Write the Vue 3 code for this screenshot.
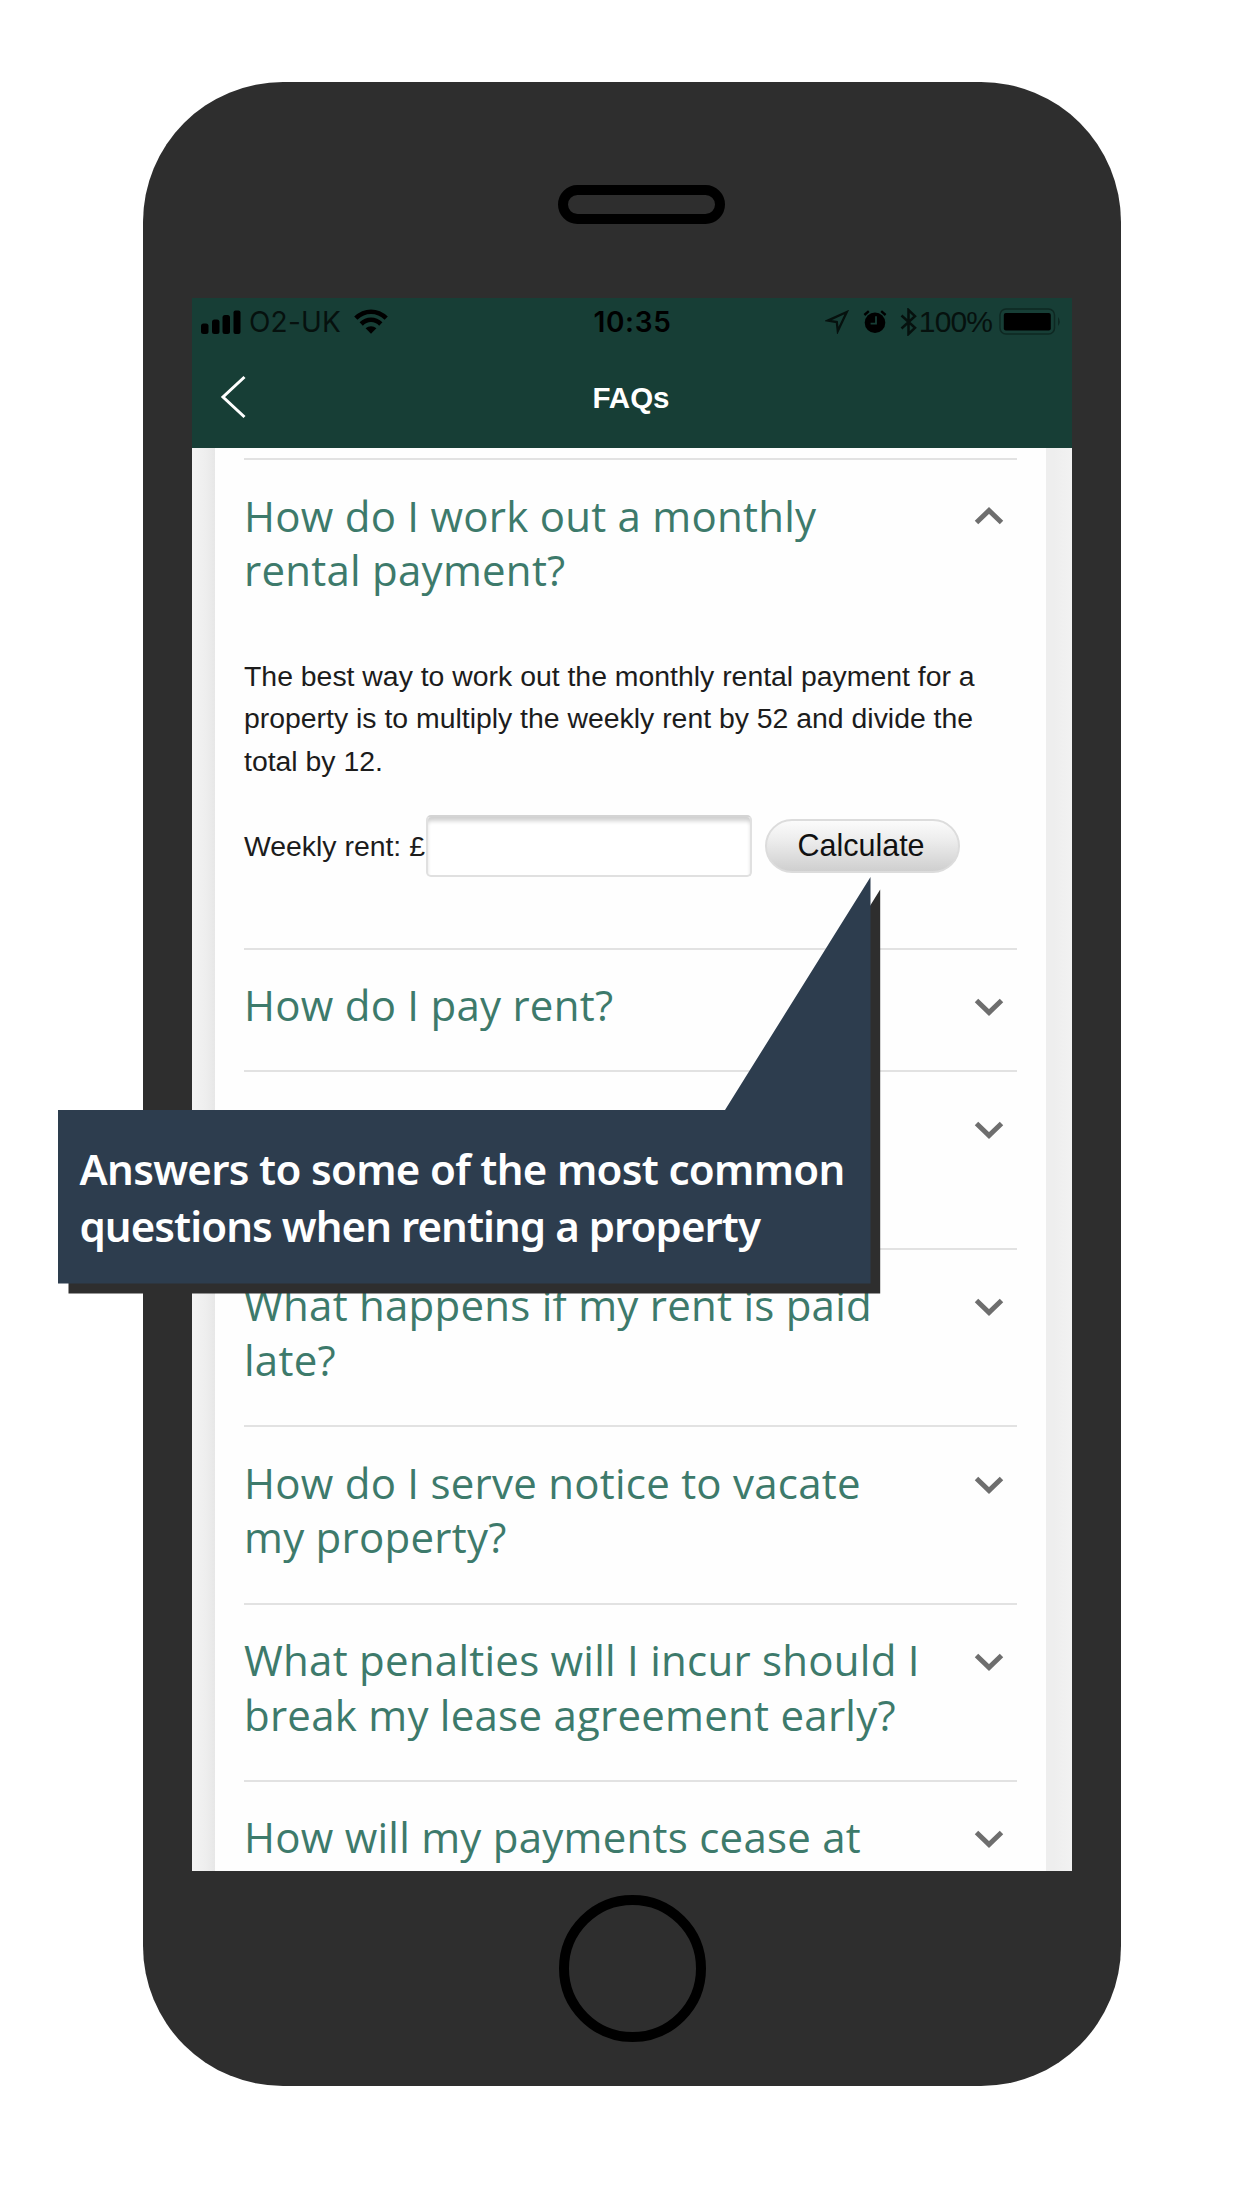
<script setup>
import { ref } from 'vue'

const rent = ref('')
// The second entry sits fully behind the callout, so it has no visible title
const questions = [
  ['How do I pay rent?'],
  [],
  ['What happens if my rent is paid', 'late?'],
  ['How do I serve notice to vacate', 'my property?'],
  ['What penalties will I incur should I', 'break my lease agreement early?'],
  ['How will my payments cease at']
]
</script>

<template>
  <div class="stage">
    <div class="phone">
      <div class="speaker"></div>
      <div class="screen">
        <header class="header">
          <div class="status">
            <div class="carrier">
              <svg class="signal" width="40" height="24" viewBox="0 0 40 24">
                <rect x="0" y="13.5" width="7.5" height="10.5" rx="2.5" />
                <rect x="11" y="9.5" width="7.5" height="14.5" rx="2.5" />
                <rect x="21.5" y="5" width="7.5" height="19" rx="2.5" />
                <rect x="32.5" y="0.5" width="7" height="23.5" rx="2" />
              </svg>
              <span>O2-UK</span>
              <svg class="wifi" width="34" height="25" viewBox="0 0 34 25">
                <g fill="none" stroke="#000" stroke-width="4.6">
                  <path d="M1.8 9.2Q8.5 2.7 17 2.7T32.2 9.2" />
                  <path d="M7.2 15Q11.4 10.8 17 10.8T26.8 15" />
                </g>
                <path d="M11.6 19.3Q14 17.2 17 17.2T22.4 19.3L17 24.8Z" />
              </svg>
            </div>
            <span class="time">10:35</span>
            <div class="power">
              <svg width="24" height="24" viewBox="0 0 24 24">
                <path d="M21.8 2L2.8 10.6L11.8 12L12.8 21Z" fill="none" stroke="#06110e" stroke-width="2.3" />
              </svg>
              <svg class="alarm" width="24" height="24" viewBox="0 0 24 24">
                <circle cx="12" cy="12.8" r="10.3" />
                <path d="M1.4 5L5.8 1.2M22.6 5L18.2 1.2" stroke="#000" stroke-width="2.4" />
                <path d="M13 6.3V13.6H7.6" fill="none" stroke="#173e36" stroke-width="1.8" />
              </svg>
              <svg class="bluetooth" width="17" height="28" viewBox="0 0 17 28">
                <path d="M1.5 7.5L15 19.8L8.5 26V2L15 8.2L1.5 20.5" fill="none" stroke="#06110e" stroke-width="2.5" />
              </svg>
              <span>100%</span>
              <svg class="battery" width="64" height="27" viewBox="0 0 64 27">
                <rect x="1" y="1" width="54.5" height="25" rx="6" fill="none" stroke="#0e2822" stroke-width="1.5" />
                <rect x="4.8" y="5" width="47" height="17.5" rx="2" />
                <path d="M59 9Q62.5 13.5 59 18Z" fill="#0e2822" />
              </svg>
            </div>
          </div>
          <div class="nav">
            <svg class="back" width="26" height="44" viewBox="0 0 26 44">
              <path d="M24.5 2L3 22L24.5 42" fill="none" stroke="#fff" stroke-width="3" />
            </svg>
            <h1>FAQs</h1>
          </div>
        </header>

        <main class="page">
          <div class="card">
            <section class="item open">
              <div class="question">
                <h2>How do I work out a monthly<br />rental payment?</h2>
                <svg class="chevron" width="30" height="20" viewBox="0 0 30 20">
                  <path d="M2.5 16.5L15 4.5L27.5 16.5" />
                </svg>
              </div>
              <p>The best way to work out the monthly rental payment for a<br />property is to multiply the weekly rent by 52 and divide the<br />total by 12.</p>
              <div class="calculator">
                <label for="rent">Weekly rent: £</label>
                <input id="rent" v-model="rent" type="text" />
                <button type="button">Calculate</button>
              </div>
            </section>
            <section v-for="(lines, index) in questions" :key="index" class="item">
              <div class="question">
                <h2><span v-for="line in lines" :key="line">{{ line }}</span></h2>
                <svg class="chevron" width="30" height="20" viewBox="0 0 30 20">
                  <path d="M2.5 3.5L15 15.5L27.5 3.5" />
                </svg>
              </div>
            </section>
          </div>
        </main>
      </div>
      <div class="home"></div>
    </div>

    <aside class="callout">
      <svg width="824" height="418" viewBox="0 0 824 418">
        <path d="M10.5 245H677.5L822.2 12.5V416.5H10.5Z" fill="#2e2e2e" />
        <path d="M0 233H667L812.5 0V406.5H0Z" fill="#2d3d4e" />
      </svg>
      <p><span class="first">Answers to some of the most common</span><span class="second">questions when renting a property</span></p>
    </aside>
  </div>
</template>

<style>
body {
  margin: 0;
  background: #fff;
}
</style>

<style scoped>
* {
  box-sizing: border-box;
}

.stage {
  position: relative;
  width: 1242px;
  height: 2208px;
  overflow: hidden;
  padding: 82px 0 0 143px;
  background: #fff;
  font-family: "Liberation Sans", Arial, sans-serif;
}

.phone {
  width: 978px;
  height: 2004px;
  padding: 103px 49px 0;
  border-radius: 140px;
  background: #2e2e2e;
  display: flex;
  flex-direction: column;
}

.speaker {
  width: 167px;
  height: 39px;
  margin-left: 366px;
  border: 10px solid #000;
  border-radius: 20px;
}

.screen {
  width: 880px;
  height: 1573px;
  margin-top: 73.5px;
  overflow: hidden;
  background: #fff;
}

.header {
  height: 150px;
  background: #173e36;
}

.status {
  display: grid;
  grid-template-columns: 1fr auto 1fr;
  align-items: center;
  height: 48px;
  padding: 0 9px 0 9px;
  font-family: Inter, sans-serif;
  font-size: 28px;
  color: #06110e;
}

.carrier,
.power {
  display: flex;
  align-items: center;
}

.carrier span {
  margin-left: 8px;
  letter-spacing: 0.2px;
}

.wifi {
  margin-left: 12.5px;
}

.time {
  padding-left: 1px;
  font-weight: 600;
  letter-spacing: 0.7px;
  color: #000;
}

.power {
  justify-content: flex-end;
}

.alarm {
  margin-left: 14px;
}

.bluetooth {
  margin-left: 13px;
}

.power span {
  margin-left: 2px;
  font-family: "Liberation Sans", Arial, sans-serif;
  font-size: 30px;
  letter-spacing: -0.9px;
}

.battery {
  margin-left: 7px;
}

.nav {
  display: grid;
  grid-template-columns: 1fr auto 1fr;
  align-items: center;
  height: 102px;
  padding: 0 30px 0 28px;
}

.back {
  margin-top: 1px;
}

h1 {
  margin: 3px 0 0;
  font-size: 29.5px;
  line-height: 36px;
  font-weight: 700;
  color: #fff;
}

.page {
  height: 1423px;
  padding: 0 26px 0 23px;
  background: linear-gradient(90deg, #f4f4f4 0, #eeeeee 14px, #e7e7e7 23px, #eeeeee 24px, #eeeeee 862px, #f2f2f2 100%);
}

.card {
  height: 1423px;
  padding: 10.5px 29px 0 29px;
  background: #fefefe;
}

.item {
  height: 177.35px;
  border-top: 2px solid #e2e2e2;
}

.item:nth-child(2) {
  height: 122.8px;
}

.item.open {
  height: 489.7px;
}

.question {
  display: flex;
  justify-content: space-between;
  padding: 28.5px 13px 0 0;
}

h2 {
  margin: 0;
  font-family: "Open Sans", sans-serif;
  font-size: 42px;
  line-height: 54.6px;
  font-weight: 400;
  letter-spacing: 0.25px;
  white-space: nowrap;
  color: #3d7a6b;
}

h2 span {
  display: block;
}

.chevron {
  margin-top: 19px;
  fill: none;
  stroke: #6e6e6e;
  stroke-width: 5px;
}

.open .chevron {
  margin-top: 17.5px;
}

p {
  margin: 0;
}

.open p {
  margin-top: 57px;
  font-size: 28.4px;
  line-height: 42.6px;
  white-space: nowrap;
  color: #1c1c1c;
}

.calculator {
  display: flex;
  align-items: center;
  margin-top: 33px;
}

label {
  width: 181.5px;
  font-size: 28.4px;
  line-height: 42px;
  white-space: nowrap;
  color: #1c1c1c;
}

input {
  width: 326px;
  height: 62px;
  padding: 0 12px;
  border: 2px solid #e0e0e0;
  border-top-color: #d4d4d4;
  border-radius: 5px;
  background: #fff;
  box-shadow: inset 0 5px 4px -1px #d0d0d0;
  font: inherit;
  font-size: 28px;
}

button {
  width: 195px;
  height: 54px;
  margin-left: 13px;
  padding: 0 2px 1px 0;
  border: 2px solid #dcdcdc;
  border-radius: 27px;
  background: linear-gradient(#fbfbfb, #ececec 40%, #cfcfcf);
  font-family: inherit;
  font-size: 30.5px;
  color: #111;
}

.home {
  width: 147px;
  height: 147px;
  margin: 24px 0 0 366.5px;
  border: 10px solid #000;
  border-radius: 50%;
}

.callout {
  position: absolute;
  left: 57.5px;
  top: 877px;
  width: 824px;
  height: 418px;
}

.callout svg {
  display: block;
}

.callout p {
  position: absolute;
  left: 22px;
  top: 264px;
  font-family: "Noto Sans", sans-serif;
  font-weight: 600;
  font-size: 42px;
  line-height: 56.6px;
  white-space: nowrap;
  color: #fff;
}

.callout span {
  display: block;
}

.first {
  letter-spacing: -0.68px;
}

.second {
  letter-spacing: -0.94px;
}
</style>
